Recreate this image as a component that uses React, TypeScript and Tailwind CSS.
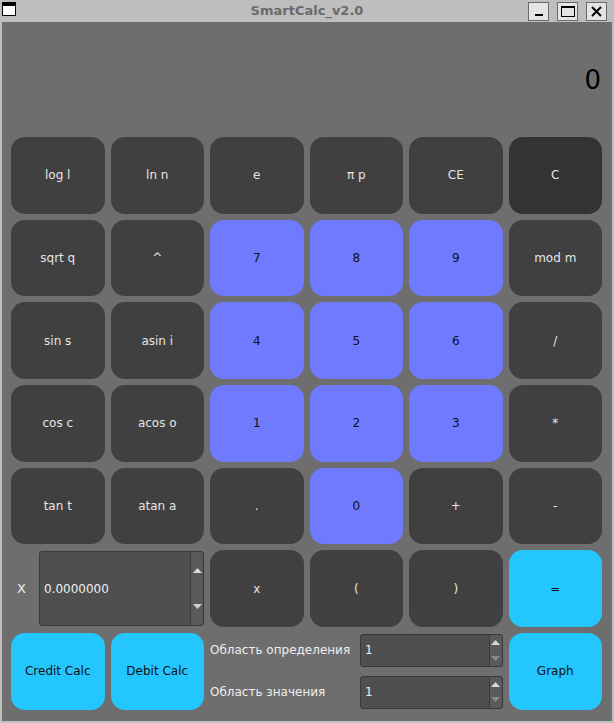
const font = { fontFamily: '"DejaVu Sans", "Liberation Sans", sans-serif' };

type Kind = "dark" | "clear" | "num" | "cyan";

const kindClass: Record<Kind, string> = {
  dark: "bg-[#404040] text-[#e6e6e6]",
  clear: "bg-[#333333] text-[#e6e6e6]",
  num: "bg-[#6f7aff] text-[#111111]",
  cyan: "bg-[#24c6fe] text-[#111111]",
};

const Key = ({ label, kind = "dark" }: { label: string; kind?: Kind }) => (
  <button className={`flex items-center justify-center rounded-[14px] text-[12px] ${kindClass[kind]}`}>
    {label}
  </button>
);

const Spin = ({ value, tall }: { value: string; tall?: boolean }) => (
  <div className="flex h-full w-full rounded-[3px] border border-[#383838] bg-[#4f4f4f]">
    <div className="flex flex-1 items-center pl-[4px] text-[12px] text-[#f0f0f0]">{value}</div>
    <div className="flex w-[13px] flex-col items-center justify-around rounded-r-[3px] border-l border-[#3c3c3c] bg-[#5a5a5a]">
      <svg width="9" height="5" viewBox="0 0 9 5">
        <polygon points="4.5,0 9,5 0,5" fill="#d8d8d8" />
      </svg>
      <svg width="9" height="5" viewBox="0 0 9 5">
        <polygon points="0,0 9,0 4.5,5" fill={tall ? "#cfcfcf" : "#8a8a8a"} />
      </svg>
    </div>
  </div>
);

export default function App() {
  return (
    <div className="flex h-[723px] w-[614px] flex-col bg-[#bebebe]" style={font}>
      {/* title bar */}
      <div className="relative flex h-[22px] items-center justify-center">
        <div className="absolute left-[2px] top-[2px] h-[14px] w-[14px] border border-black bg-white">
          <div className="h-[3px] bg-black" />
        </div>
        <span className="text-[13px] font-bold text-[#6a6a6a]">SmartCalc_v2.0</span>
        <div className="absolute right-[7px] top-[2px] flex gap-[8px]">
          <div className="flex h-[19px] w-[21px] items-end justify-center border border-[#6a6a6a] bg-[#e4e4e4] pb-[4px]">
            <div className="h-[2px] w-[8px] bg-black" />
          </div>
          <div className="flex h-[19px] w-[21px] items-center justify-center border border-[#6a6a6a] bg-[#e4e4e4]">
            <div className="h-[11px] w-[14px] border border-black border-t-[2px]" />
          </div>
          <div className="flex h-[19px] w-[21px] items-center justify-center border border-[#6a6a6a] bg-[#e4e4e4]">
            <svg width="11" height="11" viewBox="0 0 11 11">
              <path d="M1 1 L10 10 M10 1 L1 10" stroke="black" strokeWidth="2" />
            </svg>
          </div>
        </div>
      </div>

      {/* window body */}
      <div className="mx-[2px] mb-[2px] flex flex-1 flex-col bg-[#6e6e6e]">
        <div className="flex h-[115px] items-center justify-end pr-[11px] pt-[2px] text-[26px] text-black">0</div>

        <div className="grid grid-cols-6 auto-rows-[76.67px] gap-x-[6px] gap-y-[6px] pl-[9px] pr-[10px]">
          <Key label="log l" />
          <Key label="ln n" />
          <Key label="e" />
          <Key label="π p" />
          <Key label="CE" />
          <Key label="C" kind="clear" />

          <Key label="sqrt q" />
          <Key label="^" />
          <Key label="7" kind="num" />
          <Key label="8" kind="num" />
          <Key label="9" kind="num" />
          <Key label="mod m" />

          <Key label="sin s" />
          <Key label="asin i" />
          <Key label="4" kind="num" />
          <Key label="5" kind="num" />
          <Key label="6" kind="num" />
          <Key label="/" />

          <Key label="cos c" />
          <Key label="acos o" />
          <Key label="1" kind="num" />
          <Key label="2" kind="num" />
          <Key label="3" kind="num" />
          <Key label="*" />

          <Key label="tan t" />
          <Key label="atan a" />
          <Key label="." />
          <Key label="0" kind="num" />
          <Key label="+" />
          <Key label="-" />

          <div className="col-span-2 flex items-center py-[1px]">
            <span className="w-[28px] shrink-0 pl-[6px] text-[13px] text-[#eeeeee]">X</span>
            <Spin value="0.0000000" tall />
          </div>
          <Key label="x" />
          <Key label="(" />
          <Key label=")" />
          <Key label="=" kind="cyan" />

          <Key label="Credit Calc" kind="cyan" />
          <Key label="Debit Calc" kind="cyan" />
          <div className="col-span-3 flex flex-col justify-between py-[1px]">
            <div className="flex h-[33px] items-center">
              <span className="w-[150px] shrink-0 whitespace-nowrap text-[12px] text-[#eeeeee]">Область определения</span>
              <div className="h-full flex-1">
                <Spin value="1" />
              </div>
            </div>
            <div className="flex h-[33px] items-center">
              <span className="w-[150px] shrink-0 whitespace-nowrap text-[12px] text-[#eeeeee]">Область значения</span>
              <div className="h-full flex-1">
                <Spin value="1" />
              </div>
            </div>
          </div>
          <Key label="Graph" kind="cyan" />
        </div>
      </div>
    </div>
  );
}
